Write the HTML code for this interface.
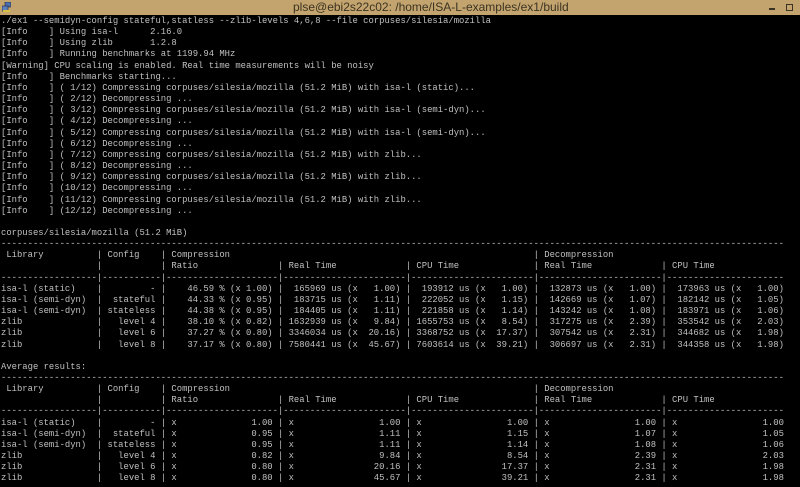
<!DOCTYPE html>
<html><head><meta charset="utf-8">
<style>
html,body{margin:0;padding:0;background:#000;width:800px;height:487px;overflow:hidden}
#tb{position:absolute;left:0;top:0;width:800px;height:15px;background:#c3a46e;}
#tb .t{position:absolute;left:293px;top:0px;font:12px/15px "Liberation Sans",sans-serif;color:#3b3322;white-space:nowrap}
#tb .min{position:absolute;left:769px;top:8px;width:6px;height:1.5px;background:#3b3322}
#tb .max{position:absolute;left:786px;top:4px;width:5px;height:5px;border:1.3px solid #3b3322}
#tb .ic{position:absolute;left:2px;top:2px;width:9px;height:10px}
pre{position:absolute;left:1px;top:16px;margin:0;font-family:"Liberation Mono",monospace;font-size:8.88px;line-height:11.16px;color:#c0c0c0;white-space:pre}
</style></head><body>
<div id="tb">
<svg class="ic" viewBox="0 0 9 10"><rect x="3" y="0" width="6" height="5" fill="#4a6fb0" stroke="#223" stroke-width=".6"/><rect x="0" y="4" width="6" height="5" fill="#5a80c0" stroke="#223" stroke-width=".6"/><rect x="1" y="8" width="7" height="2" fill="#d8c040"/></svg>
<div class="t">plse@ebi2s22c02: /home/ISA-L-examples/ex1/build</div>
<div class="min"></div><div class="max"></div>
</div>
<pre>./ex1 --semidyn-config stateful,statless --zlib-levels 4,6,8 --file corpuses/silesia/mozilla
[Info    ] Using isa-l      2.16.0
[Info    ] Using zlib       1.2.8
[Info    ] Running benchmarks at 1199.94 MHz
[Warning] CPU scaling is enabled. Real time measurements will be noisy
[Info    ] Benchmarks starting...
[Info    ] ( 1/12) Compressing corpuses/silesia/mozilla (51.2 MiB) with isa-l (static)...
[Info    ] ( 2/12) Decompressing ...
[Info    ] ( 3/12) Compressing corpuses/silesia/mozilla (51.2 MiB) with isa-l (semi-dyn)...
[Info    ] ( 4/12) Decompressing ...
[Info    ] ( 5/12) Compressing corpuses/silesia/mozilla (51.2 MiB) with isa-l (semi-dyn)...
[Info    ] ( 6/12) Decompressing ...
[Info    ] ( 7/12) Compressing corpuses/silesia/mozilla (51.2 MiB) with zlib...
[Info    ] ( 8/12) Decompressing ...
[Info    ] ( 9/12) Compressing corpuses/silesia/mozilla (51.2 MiB) with zlib...
[Info    ] (10/12) Decompressing ...
[Info    ] (11/12) Compressing corpuses/silesia/mozilla (51.2 MiB) with zlib...
[Info    ] (12/12) Decompressing ...

corpuses/silesia/mozilla (51.2 MiB)
---------------------------------------------------------------------------------------------------------------------------------------------------
 Library          | Config    | Compression                                                         | Decompression
                  |           | Ratio               | Real Time             | CPU Time              | Real Time             | CPU Time
------------------|-----------|---------------------|-----------------------|-----------------------|-----------------------|----------------------
isa-l (static)    |         - |    46.59 % (x 1.00) |  165969 us (x   1.00) |  193912 us (x   1.00) |  132873 us (x   1.00) |  173963 us (x   1.00)
isa-l (semi-dyn)  |  stateful |    44.33 % (x 0.95) |  183715 us (x   1.11) |  222052 us (x   1.15) |  142669 us (x   1.07) |  182142 us (x   1.05)
isa-l (semi-dyn)  | stateless |    44.38 % (x 0.95) |  184405 us (x   1.11) |  221858 us (x   1.14) |  143242 us (x   1.08) |  183971 us (x   1.06)
zlib              |   level 4 |    38.10 % (x 0.82) | 1632939 us (x   9.84) | 1655753 us (x   8.54) |  317275 us (x   2.39) |  353542 us (x   2.03)
zlib              |   level 6 |    37.27 % (x 0.80) | 3346034 us (x  20.16) | 3368752 us (x  17.37) |  307542 us (x   2.31) |  344682 us (x   1.98)
zlib              |   level 8 |    37.17 % (x 0.80) | 7580441 us (x  45.67) | 7603614 us (x  39.21) |  306697 us (x   2.31) |  344358 us (x   1.98)

Average results:
---------------------------------------------------------------------------------------------------------------------------------------------------
 Library          | Config    | Compression                                                         | Decompression
                  |           | Ratio               | Real Time             | CPU Time              | Real Time             | CPU Time
------------------|-----------|---------------------|-----------------------|-----------------------|-----------------------|----------------------
isa-l (static)    |         - | x              1.00 | x                1.00 | x                1.00 | x                1.00 | x                1.00
isa-l (semi-dyn)  |  stateful | x              0.95 | x                1.11 | x                1.15 | x                1.07 | x                1.05
isa-l (semi-dyn)  | stateless | x              0.95 | x                1.11 | x                1.14 | x                1.08 | x                1.06
zlib              |   level 4 | x              0.82 | x                9.84 | x                8.54 | x                2.39 | x                2.03
zlib              |   level 6 | x              0.80 | x               20.16 | x               17.37 | x                2.31 | x                1.98
zlib              |   level 8 | x              0.80 | x               45.67 | x               39.21 | x                2.31 | x                1.98
</pre>
</body></html>
